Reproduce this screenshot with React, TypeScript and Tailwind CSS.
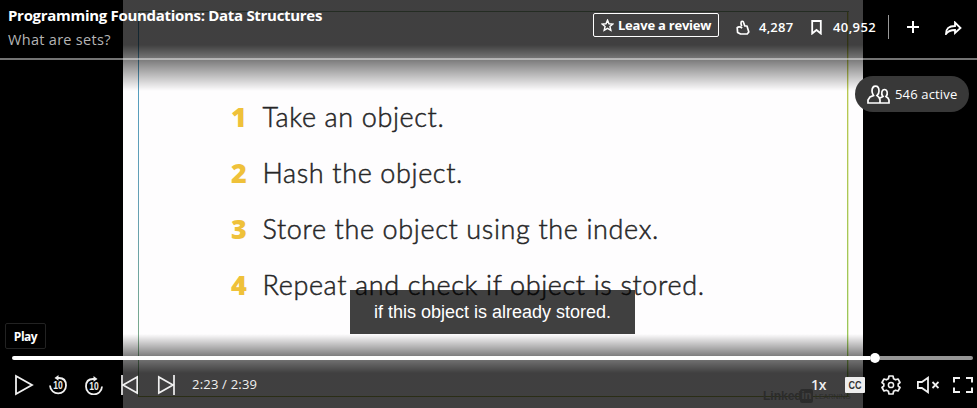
import type { ReactNode } from 'react';

type IconProps = { box: string; className: string; children: ReactNode };

function Icon({ box, className, children }: IconProps) {
  return (
    <svg viewBox={box} className={`block shrink-0 ${className}`} fill="none" stroke="currentColor" strokeWidth="2" aria-hidden="true">
      {children}
    </svg>
  );
}

const steps = [
  'Take an object.',
  'Hash the object.',
  'Store the object using the index.',
  'Repeat and check if object is stored.',
];

function Slide() {
  return (
    <div className="col-start-1 row-start-1 ml-[123px] w-[740px] h-[408px] bg-[#fefdfe] grid">
      <div className="col-start-1 row-start-1 ml-[15px] mt-[11px] w-[711px] h-[386px] flex flex-col">
        <div className="h-px bg-[#8fb08a]" />
        <div className="flex-1 flex justify-between">
          <div className="w-px bg-linear-to-b from-[#4a9bc4] via-[#649fb5] to-[#84ad76]" />
          <div className="w-[2px] border-r border-[#e4ecc0] bg-linear-to-b from-[#c3c84e] to-[#8fc65c]" />
        </div>
        <div className="h-px bg-[#a8b455]" />
      </div>
      <ol className="col-start-1 row-start-1 pt-[89px] pl-[108px] font-[Lato,sans-serif] text-[27px] leading-[56px] text-[#262627]">
        {steps.map((text, i) => (
          <li key={text} className="flex h-[56px] whitespace-nowrap">
            <span className="w-[31.5px] font-extrabold font-['Open_Sans',sans-serif] text-[27px] text-[#efc13a]">{i + 1}</span>
            <span className="font-light tracking-[0.63px] [-webkit-text-stroke:0.5px_#262627]">{text}</span>
          </li>
        ))}
      </ol>
      <div className="col-start-1 row-start-1 self-end justify-self-start ml-[640px] mb-[4px] flex items-center h-[16px] text-[#adadad] font-['Liberation_Sans',sans-serif] whitespace-nowrap">
        <span className="text-[12px] font-bold leading-[16px] w-[37px]">Linked</span>
        <span className="bg-[#adadad] text-[#fefdfe] text-[11px] font-bold leading-[13px] w-[13px] h-[14px] text-center rounded-[2px]">in</span>
        <span className="text-[7px] leading-[8px] pl-[2px] pt-[2px]">LEARNING</span>
      </div>
    </div>
  );
}

function Header() {
  return (
    <header className="h-[60px] border-b-2 border-white/45 flex justify-between">
      <div className="pl-2 pt-[5px] whitespace-nowrap">
        <h1 className="text-[15px] leading-[20px] font-bold tracking-[-0.3px]">Programming Foundations: Data Structures</h1>
        <p className="text-[14.5px] leading-[20px] mt-[5px] tracking-[0.3px] text-[#b5b5b5]">What are sets?</p>
      </div>
      <div className="flex pt-[13px] w-[384px] text-[13px] font-semibold leading-[24px] whitespace-nowrap">
        <button className="w-[126px] h-[24px] border border-white rounded-[2px] flex items-center pl-[7px]">
          <Icon box="0 0 14 14" className="w-[13px] h-[13px] mr-[4px]">
            <path strokeWidth="1.5" d="M7 1.2 8.6 5.1l4.2.3-3.2 2.7 1 4.1L7 10l-3.6 2.2 1-4.1L1.2 5.4l4.2-.3Z" />
          </Icon>
          <span className="text-[13px] font-bold leading-[22px] tracking-[-0.22px]">Leave a review</span>
        </button>
        <button className="ml-[17px] flex items-center h-[28px]">
          <Icon box="0 0 14 15" className="w-[14px] h-[15px] mr-[9px]">
            <path strokeWidth="1.7" strokeLinejoin="round" d="M5.6 6.2 5 3.5C4.8 1 7 .6 7.5 2.2L8.8 6H11l1.8 6-1.6 2H4.6L1.6 12.4 1.2 7.6Q3 6 6.2 8" />
          </Icon>
          <span className="w-[52px] text-left tracking-[0.2px]">4,287</span>
        </button>
        <button className="flex items-center h-[28px]">
          <Icon box="0 0 11 15" className="w-[11px] h-[15px] mr-[11px]">
            <path strokeWidth="1.8" d="M1.2 1h8.6v12.5L5.5 10l-4.3 3.5Z" />
          </Icon>
          <span className="w-[55px] text-left tracking-[0.4px]">40,952</span>
        </button>
        <div className="w-px h-[24px] mt-[2px] bg-white/60" />
        <Icon box="0 0 12 12" className="w-[12px] h-[12px] ml-[18px] mt-[8px]">
          <path d="M6 0v12M0 6h12" />
        </Icon>
        <Icon box="0 0 17 14" className="w-[17px] h-[14px] ml-[26px] mt-[8px]">
          <path strokeWidth="1.8" d="M1 13c0-6 3-8 9-8V1.5L15.5 7 10 12V9C5 9 3 10 1 13Z" />
        </Icon>
      </div>
    </header>
  );
}

function ActiveViewers() {
  return (
    <div className="self-end mr-[8px] mt-[16px] w-[114px] h-[36px] rounded-full bg-[#383838] flex items-center pl-[12px] text-[13px] whitespace-nowrap">
      <Icon box="0 0 23 19" className="w-[23px] h-[19px] mr-[5px]">
        <path strokeWidth="1.7" d="M5 6c0-6.5 7-6.5 7 0 0 2-.7 3.5-2 4.5l2 2L13 15v3H1v-3l2-3 3.5-1.5C5.5 9 5 8 5 6ZM13 18h9v-3l-1-2-2-1.5c2.5-3 1-7-1.5-7s-4 4-1.5 7L13 13" />
      </Icon>
      <span className="tracking-[0.15px] leading-[20px]">546 active</span>
    </div>
  );
}

function Replay({ forward = false }: { forward?: boolean }) {
  return (
    <svg viewBox="0 0 18 20" className="block w-[18px] h-[20px]" fill="none" stroke="currentColor" strokeWidth="1.8" aria-hidden="true">
      <g transform={forward ? 'translate(18 1) scale(-1 1)' : undefined}>
        <path d="M1 10.5c.5 10.5 16 10.5 16 0 0-5-3-7.5-7-7.5H8" />
        <path fill="currentColor" stroke="none" d="M5.5 2.9 9.5 0v5.8Z" />
      </g>
      <text x="9" y={forward ? 14.8 : 13.8} textAnchor="middle" fontSize="10" fontWeight="700" fontFamily="Liberation Sans, sans-serif" textLength="9.5" lengthAdjust="spacingAndGlyphs" fill="currentColor" stroke="none">10</text>
    </svg>
  );
}

function Controls() {
  return (
    <footer className="mt-auto">
      <div className="ml-[5px] w-[41px] h-[26px] border border-[#222] bg-black rounded-[2px] text-center text-[12px] font-bold leading-[25px] tracking-[-0.5px]">Play</div>
      <div className="mt-[4px] ml-[12px] mr-[4px] h-[10px] flex items-center">
        <div className="w-[858px] h-[4px] rounded-l-sm bg-white" />
        <div className="size-[10px] rounded-full bg-white" />
        <div className="flex-1 h-[4px] rounded-r-sm bg-[#969696]" />
      </div>
      <div className="h-[45px] pb-[1px] pl-[15px] pr-[4px] flex items-center text-[#f0f0f0]">
        <Icon box="0 0 19 22" className="w-[19px] h-[22px]"><path strokeWidth="1.8" d="M1 2v18l16-9Z" /></Icon>
        <div className="ml-[15px]"><Replay /></div>
        <div className="ml-[18px]"><Replay forward /></div>
        <Icon box="0 0 18 20" className="w-[18px] h-[20px] ml-[18px]"><path strokeWidth="1.7" d="M1 0v20M16.2 2v16L2 10Z" /></Icon>
        <Icon box="0 0 18 20" className="w-[18px] h-[20px] ml-[18px]"><path strokeWidth="1.7" d="M17 0v20M1.8 2v16L16 10Z" /></Icon>
        <span className="ml-[17px] text-[13px] tracking-[0.2px] whitespace-nowrap">2:23 / 2:39</span>
        <div className="w-[162px] ml-auto flex items-center">
          <span className="w-[34px] text-[14px] leading-[14px] font-semibold tracking-[-0.3px]">1x</span>
          <svg viewBox="0 0 20 16" className="block w-[20px] h-[16px]" aria-hidden="true">
            <rect width="20" height="16" rx="1" fill="#eee" />
            <text x="10" y="12" textAnchor="middle" fontSize="11" fontWeight="700" fontFamily="Liberation Sans, sans-serif" textLength="13" lengthAdjust="spacingAndGlyphs" fill="#333">CC</text>
          </svg>
          <Icon box="0 0 20 20" className="w-[20px] h-[20px] ml-[16px]">
            <path strokeWidth="1.7" strokeLinejoin="round" d="M8 1h4l.6 2.7 2 1.1 2.4-.8 2 3.5L17.2 9v2l1.8 1.5-2 3.5-2.4-.8-2 1.1L12 19H8l-.6-2.7-2-1.1L3 16l-2-3.5L2.8 11V9L1 7.5 3 4l2.4.8 2-1.1Z" />
            <circle cx="10" cy="10" r="2.6" strokeWidth="1.5" />
          </Icon>
          <Icon box="0 0 23 18" className="w-[23px] h-[18px] ml-[15px]">
            <path strokeWidth="1.8" d="M1.9 6h4L12 1.8v14.4L5.9 12h-4ZM16.5 6l6 6M22.5 6l-6 6" />
          </Icon>
          <Icon box="0 0 20 16" className="w-[20px] h-[16px] ml-auto">
            <path d="M1 5.5V1h6M13 1h6v4.5M19 10.5V15h-6M7 15H1v-4.5" />
          </Icon>
        </div>
      </div>
    </footer>
  );
}

export default function App() {
  return (
    <main className="grid w-[977px] h-[408px] overflow-hidden bg-black text-white font-['Open_Sans',sans-serif]">
      <Slide />
      <div className="col-start-1 row-start-1 bg-[linear-gradient(to_bottom,#000000bf_0,#000000bf_45px,#0000007a_62px,#0000_91px,#0000_334px,#00000080_356px,#000000bf_373px,#000000bf_408px)]" />
      <div className="col-start-1 row-start-1 self-end justify-self-start ml-[350px] mb-[74px] w-[285px] h-[44px] bg-black/75 text-center font-['Liberation_Sans',sans-serif] text-[18px] leading-[44px] whitespace-nowrap">
        if this object is already stored.
      </div>
      <div className="col-start-1 row-start-1 flex flex-col">
        <Header />
        <ActiveViewers />
        <Controls />
      </div>
    </main>
  );
}
